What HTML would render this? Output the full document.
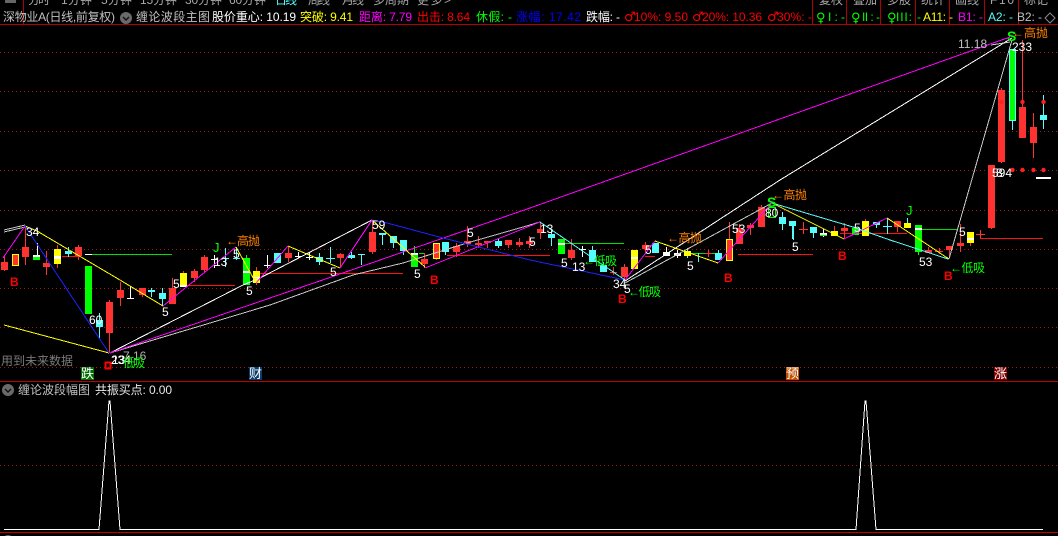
<!DOCTYPE html>
<html lang="zh">
<head>
<meta charset="utf-8">
<title>缠论波段主图</title>
<style>
html,body{margin:0;padding:0;background:#000;width:1058px;height:536px;overflow:hidden}
svg{display:block;position:absolute;left:0;top:0}
text{font-family:"Liberation Sans","WenQuanYi Zen Hei","Noto Sans CJK SC",sans-serif;font-size:12px;white-space:pre}
.n{fill:#fff}
.b{fill:#ff0000;font-weight:bold;font-size:17px}
.o{fill:#ff8000;font-size:12px}
.g{fill:#00ff00;font-size:12px}
.s{font-family:"DejaVu Sans",sans-serif;font-size:13px}
</style>
</head>
<body>
<svg width="1058" height="536" viewBox="0 0 1058 536" xmlns="http://www.w3.org/2000/svg">
<rect width="1058" height="536" fill="#000"/>

<!-- top menu -->
<g fill="#a8a8a8">
<text x="28" y="4" textLength="22">分时</text>
<text x="61" y="4" textLength="31">1分钟</text>
<text x="101" y="4" textLength="31">5分钟</text>
<text x="140" y="4" textLength="37">15分钟</text>
<text x="185" y="4" textLength="37">30分钟</text>
<text x="229" y="4" textLength="37">60分钟</text>
<text x="275" y="4" textLength="22" fill="#54ffff">日线</text>
<text x="308" y="4" textLength="22">周线</text>
<text x="342" y="4" textLength="22">月线</text>
<text x="373" y="4" textLength="36">多周期</text>
<text x="417" y="4" textLength="34">更多&gt;</text>
<text x="819" y="4" textLength="24">复权</text>
<text x="853" y="4" textLength="24">叠加</text>
<text x="887" y="4" textLength="24">多股</text>
<text x="921" y="4" textLength="24">统计</text>
<text x="955" y="4" textLength="24">画线</text>
<text x="990" y="4" textLength="24">F10</text>
<text x="1024" y="4" textLength="24">标记</text>
</g>
<rect x="5" y="0" width="11" height="3" fill="#666"/>
<path d="M0 24.5H1058M23.5 0V24M812.5 0V24M846.5 0V24M880.5 0V24M915.5 0V24M949.5 0V24M984.5 0V24M1018.5 0V24" stroke="#b00000" stroke-width="1" fill="none" shape-rendering="crispEdges"/>

<!-- legend -->
<text x="3" y="21" fill="#c0c0c0" textLength="112">深物业A(日线,前复权)</text>
<circle cx="126" cy="18" r="6" fill="#6a6a6a"/>
<path d="M123 17l3 3 3-3" stroke="#111" stroke-width="1.4" fill="none"/>
<text x="136" y="21" fill="#c0c0c0" textLength="74">缠论波段主图</text>
<text x="212" y="21" fill="#fff" textLength="84">股价重心: 10.19</text>
<text x="300" y="21" fill="#ffff00" textLength="53">突破: 9.41</text>
<text x="359" y="21" fill="#ff00ff" textLength="53">距离: 7.79</text>
<text x="417" y="21" fill="#ff0000" textLength="53">出击: 8.64</text>
<text x="476" y="21" fill="#00ff00" textLength="36">休假: -</text>
<text x="516" y="21" fill="#0000ff" textLength="65">涨幅: 17.42</text>
<text x="586" y="21" fill="#fff" textLength="34">跌幅: -</text>
<text class="s" x="624" y="21" fill="#ff0000">♂</text>
<text x="634" y="21" fill="#ff0000" textLength="54">10%: 9.50</text>
<text class="s" x="692" y="21" fill="#ff0000">♂</text>
<text x="702" y="21" fill="#ff0000" textLength="60">20%: 10.36</text>
<text class="s" x="767" y="21" fill="#ff0000">♂</text>
<text x="777" y="21" fill="#ff0000" textLength="35">30%: -</text>
<text class="s" x="816" y="22" fill="#00ff00">♀</text>
<text x="828" y="21" fill="#00ff00" textLength="17">I : -</text>
<text class="s" x="851" y="22" fill="#00ff00">♀</text>
<text x="862" y="21" fill="#00ff00" textLength="18">II : -</text>
<text class="s" x="887" y="22" fill="#00ff00">♀</text>
<text x="896" y="21" fill="#00ff00" textLength="25">III: -</text>
<text x="923" y="21" fill="#ffff00" textLength="30">A11: -</text>
<text x="958" y="21" fill="#ff00ff" textLength="25">B1: -</text>
<text x="988" y="21" fill="#54ffff" textLength="25">A2: -</text>
<text x="1017" y="21" fill="#c0c0c0" textLength="25">B2: -</text>
<path d="M1050 13l5 5-5 5-5-5z" stroke="#888" fill="none"/>

<!-- dotted grid -->
<path d="M0 52.5H1058M0 91.5H1058M0 131.5H1058M0 170.5H1058M0 210.5H1058M0 249.5H1058M0 288.5H1058M0 327.5H1058M0 367.5H1058M0 465.5H1058" stroke="#a01818" stroke-dasharray="1 3" fill="none" shape-rendering="crispEdges"/>

<!-- horizontal level lines -->
<g fill="none" shape-rendering="crispEdges">
<path d="M62 256.5H78M183 285.5H235M260 273.5H403M447 255.5H550M645 256.5H655M738 254.5H813M840 233.5H907M980 238.5H1043" stroke="#ff1010"/>
<path d="M92 254.5H172M419 253.5H425M561 243.5H624M687 253.5H718M922 229.5H958" stroke="#00e000"/>
</g>

<!-- wicks -->
<path fill="none" stroke="#ff3232" shape-rendering="crispEdges" d="M4.5 255V271M25.5 226V265M46.5 251V275M78.5 245V260M57.5 245V268M109.5 300V353M120.5 282V306M142.5 288V297M172.5 278V304M183.5 271V273M194.5 269V282M204.5 255V273M256.5 267V285M288.5 247V262M340.5 253V268M372.5 220V254M424.5 253V268M436.5 243V260M456.5 243V257M467.5 226V247M478.5 236V248M487.5 241V248M508.5 240V248M519.5 238V247M529.5 236V248M540.5 222V239M571.5 239V260M613.5 267V275M610 272.5H617M624.5 264V280M645.5 242V252M708.5 250V257M705 253.5H712M729.5 222V261M739.5 224V244M750.5 223V235M761.5 205V227M803.5 222V234M799 229.5H808M834.5 226V236M844.5 223V239M865.5 219V236M897.5 221V232M928.5 247V253M939.5 248V254M935 251.5H943M949.5 246V258M960.5 224V252M970.5 232V246M980.5 230V238M976 234.5H985M991.5 165V229M1001.5 88V163M1022.5 40V138M1033.5 113V158"/>
<path fill="none" stroke="#54fcfc" shape-rendering="crispEdges" d="M68.5 247V257M99.5 313V338M151.5 288V297M148 290.5H155M162.5 288V306M225.5 248V267M222 258.5H229M236.5 247V260M233 258.5H240M277.5 253V263M319.5 253V265M330.5 247V263M326 258.5H335M351.5 252V259M361.5 254V265M382.5 233V245M393.5 236V248M403.5 240V255M445.5 242V255M498.5 238V248M551.5 230V246M592.5 246V262M603.5 262V272M655.5 243V253M687.5 248V258M698.5 253V262M718.5 250V260M782.5 212V230M792.5 221V239M793.5 221V240M813.5 227V238M876.5 222V228M887.5 218V234M883 226.5H892M907.5 218V225M1012.5 49V130M1043.5 95V129"/>
<path fill="none" stroke="#ffffff" shape-rendering="crispEdges" d="M130.5 286V299M127 298.5H134M214.5 255V268M211 259.5H218M267.5 255V268M264 265.5H271M298.5 252V258M295 256.5H302M309.5 252V260M306 257.5H313M582.5 246V257M579 249.5H586M37.5 243V260M666.5 247V256M677.5 250V258M823.5 229V237"/>
<path fill="none" stroke="#00ff00" shape-rendering="crispEdges" d="M246.5 255V285M414.5 246V267M918.5 225V255"/>

<!-- bodies -->
<path fill="#ff3232" d="M1 262h7v8H1zM12 254h7v12h-7zM22 247h7v10h-7zM43 263h7v4h-7zM75 247h7v9h-7zM106 302h7v31h-7zM117 290h7v8h-7zM139 288h7v7h-7zM169 288h7v16h-7zM191 271h7v7h-7zM201 257h7v13h-7zM285 253h7v5h-7zM337 254h7v4h-7zM369 232h7v20h-7zM421 259h7v5h-7zM433 243h7v16h-7zM453 246h7v6h-7zM464 241h7v3h-7zM475 243h7v2h-7zM484 241h7v2h-7zM505 240h7v5h-7zM516 242h7v3h-7zM526 241h7v3h-7zM537 229h7v4h-7zM568 250h7v8h-7zM621 267h7v10h-7zM642 245h7v4h-7zM726 239h7v22h-7zM736 228h7v16h-7zM747 225h7v3h-7zM758 207h7v20h-7zM841 228h7v3h-7zM894 221h7v6h-7zM925 250h7v3h-7zM946 246h7v4h-7zM957 243h7v3h-7zM988 165h7v63h-7zM998 90h7v72h-7zM1019 107h7v31h-7zM1030 127h7v16h-7z"/>
<path fill="#54fcfc" d="M65 251h7v3h-7zM96 320h7v7h-7zM148 290h7v2h-7zM159 293h7v6h-7zM274 253h7v10h-7zM316 257h7v5h-7zM348 255h7v3h-7zM358 254h7v1h-7zM379 233h7v2h-7zM390 236h7v7h-7zM400 240h7v11h-7zM442 242h7v10h-7zM495 241h7v5h-7zM548 234h7v4h-7zM589 250h7v12h-7zM600 265h7v7h-7zM652 243h7v10h-7zM715 253h7v7h-7zM779 217h7v7h-7zM789 221h7v5h-7zM810 227h7v6h-7zM873 222h7v3h-7zM1040 115h7v5h-7z"/>
<path fill="#ffff00" d="M54 249h7v15h-7zM180 273h7v14h-7zM253 271h7v12h-7zM631 250h7v19h-7zM684 251h7v5h-7zM831 231h7v5h-7zM862 221h7v15h-7zM904 223h7v5h-7zM967 232h7v11h-7z"/>
<path fill="#00ff00" d="M85 266h7v48h-7zM243 258h7v27h-7zM411 253h7v14h-7zM558 239h7v15h-7zM852 228h7v7h-7zM915 225h7v27h-7zM1009 49h7v72h-7zM33 257h7v3h-7zM820 235h7v1h-7z"/>
<path fill="#fff" d="M33 255h7v2h-7zM54 256h7v3h-7zM180 285h7v2h-7zM85 254h7v1h-7zM243 271h7v2h-7zM253 277h7v1h-7zM411 253h7v2h-7zM558 243h7v2h-7zM631 257h7v2h-7zM663 252h7v4h-7zM674 253h7v3h-7zM820 233h7v2h-7zM915 228h7v2h-7zM967 238h7v2h-7zM1036 177h15v2h-15z"/>
<path fill="none" stroke="#ffff00" shape-rendering="crispEdges" d="M12.5 254.5h6v11h-6zM433.5 243.5h6v15h-6zM726.5 239.5h6v21h-6z"/>
<path fill="none" stroke="#54fcfc" shape-rendering="crispEdges" d="M1009.5 49.5h6v71h-6z"/>
<path fill="none" stroke="#00ff00" stroke-width="1.4" shape-rendering="crispEdges" d="M768.5 207.5h7v10h-7z"/>
<g fill="#ff2020">
<circle cx="1001.5" cy="102" r="2.2"/><circle cx="1022.5" cy="102" r="2.2"/><circle cx="1043.5" cy="102" r="2.2"/>
<circle cx="1012.5" cy="170" r="2.2"/><circle cx="1022.5" cy="170" r="2.2"/><circle cx="1033.5" cy="170" r="2.2"/><circle cx="1043.5" cy="170" r="2.2"/>
</g>

<!-- wave lines -->
<g fill="none" shape-rendering="crispEdges">
<path stroke="#ffffff" d="M110 353L243 285L260 278L372 220"/>
<path stroke="#c8c8c8" d="M110 353L270 305L353 275L403 263L467 243L530 225L540 222"/>
<path stroke="#ffffff" d="M625 281L780 180L1012 38"/>
<path stroke="#c8c8c8" d="M625 283L772 203M949 259L1012 40M4 230L25 225M4 232L25 227M991 45L1010 42"/>
<path stroke="#ff00ff" d="M110 353L270 298L337 275L403 252L530 208L1010 37"/>
<path stroke="#ff00ff" d="M3 258L25 226M163 306L236 247M256 283L288 246M340 268L372 220M425 268L540 222M625 280L655 241M718 263L772 203M844 239L887 218"/>
<path stroke="#ffff00" d="M4 325L109 353M25 226L37 231L120 280L163 306M236 247L256 283M288 246L340 268M372 220L425 267M655 241L718 263M772 203L844 239M887 218L949 259"/>
<path stroke="#2020ff" d="M25 226L109 353M372 220L387 223L443 238L530 260L625 280"/>
<path stroke="#54fcfc" d="M540 222L625 280M772 203L853 227L890 240L948 259"/>
</g>

<!-- white numbers -->
<g class="n">
<text x="26" y="236">34</text>
<text x="162" y="316">5</text>
<text x="173" y="288">5</text>
<text x="233" y="258">5</text>
<text x="246" y="295">5</text>
<text x="214" y="266">13</text>
<text x="330" y="276">5</text>
<text x="372" y="229">59</text>
<text x="414" y="278">5</text>
<text x="467" y="237">5</text>
<text x="529" y="246">5</text>
<text x="540" y="233">13</text>
<text x="561" y="267">5</text>
<text x="572" y="271">13</text>
<text x="613" y="288">34</text>
<text x="624" y="293">5</text>
<text x="645" y="254">5</text>
<text x="687" y="270">5</text>
<text x="732" y="233">53</text>
<text x="765" y="217">80</text>
<text x="792" y="251">5</text>
<text x="854" y="232">5</text>
<text x="919" y="266">53</text>
<text x="959" y="236">5</text>
<text x="89" y="324">60</text>
<text x="111" y="364">234</text>
<text x="112" y="364">13</text>
<text x="992" y="177">594</text>
<text x="996" y="177">8</text>
<text x="1012" y="51">233</text>
</g>
<text x="958" y="48" fill="#c0c0c0">11.18</text>
<text x="123" y="360" fill="#b0b0b0">7.16</text>

<!-- B marks -->
<g class="b">
<text x="10" y="286">B</text>
<text x="430" y="284">B</text>
<text x="618" y="303">B</text>
<text x="724" y="282">B</text>
<text x="838" y="260">B</text>
<text x="944" y="280">B</text>
</g>
<rect x="105.5" y="362.5" width="5" height="6" fill="none" stroke="#ff0000" stroke-width="2" shape-rendering="crispEdges"/>

<!-- orange labels -->
<g class="o">
<text x="226" y="245" textLength="34">←高抛</text>
<text x="667" y="242" textLength="35">←高抛</text>
<text x="772" y="199" textLength="35">←高抛</text>
<text x="1012" y="37" textLength="36">←高抛</text>
</g>
<!-- green labels -->
<g class="g">
<text x="583" y="265" textLength="34">←低吸</text>
<text x="628" y="296" textLength="33">←低吸</text>
<text x="950" y="272" textLength="35">←低吸</text>
<text x="123" y="367" textLength="22">低吸</text>
</g>
<g fill="#00ff00">
<text x="213" y="252" style="font-size:13px">J</text>
<text x="906" y="215" style="font-size:13px">J</text>
<text x="767" y="207" style="font-size:14px;font-weight:bold">S</text>
<text x="1007" y="41" style="font-size:14px;font-weight:bold">S</text>
</g>

<text x="1" y="365" fill="#7a7a7a" textLength="72">用到未来数据</text>

<!-- bottom tags -->
<rect x="81" y="367" width="13" height="13" fill="#006e00"/>
<text x="81" y="378" fill="#fff" style="font-size:13px">跌</text>
<rect x="249" y="367" width="13" height="13" fill="#0a3c6e"/>
<text x="249" y="378" fill="#fff" style="font-size:13px">财</text>
<rect x="786" y="367" width="13" height="13" fill="#c05000"/>
<text x="786" y="378" fill="#fff" style="font-size:13px">预</text>
<rect x="994" y="367" width="13" height="13" fill="#800000"/>
<text x="994" y="378" fill="#fff" style="font-size:13px">涨</text>

<!-- lower pane -->
<path d="M0 381.5H1058M0 532.5H1058" stroke="#c00000" fill="none" shape-rendering="crispEdges"/>
<circle cx="8" cy="390" r="6" fill="#6a6a6a"/>
<path d="M5 389l3 3 3-3" stroke="#111" stroke-width="1.4" fill="none"/>
<text x="18" y="394" fill="#c0c0c0" textLength="72">缠论波段幅图</text>
<text x="95" y="394" fill="#e8e8e8" textLength="77">共振买点: 0.00</text>
<path d="M4 529.5H99L109 401H110L120 529.5H856L865 401H866L876 529.5H1043" stroke="#fff" fill="none" shape-rendering="crispEdges"/>
<circle cx="8" cy="541" r="6" fill="#6a6a6a"/>
</svg>
</body>
</html>
